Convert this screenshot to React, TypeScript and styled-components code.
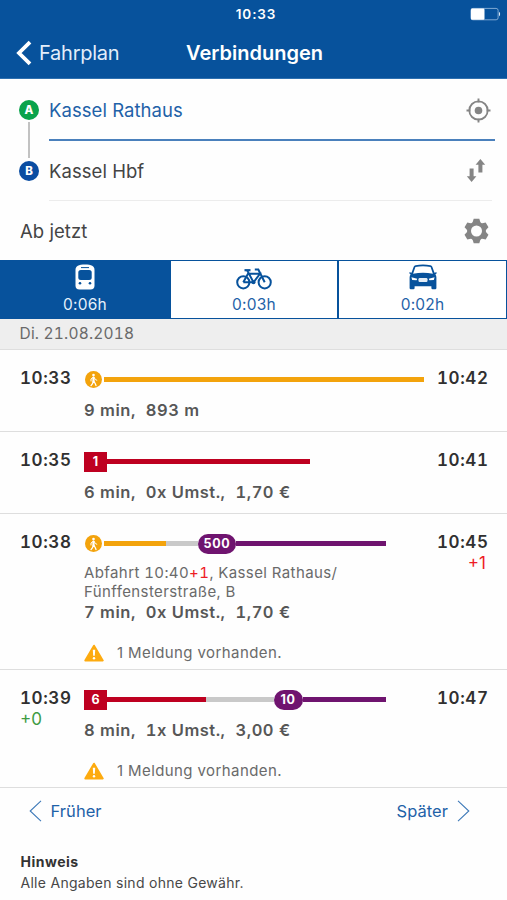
import React from "react";
import styled, { createGlobalStyle } from "styled-components";

const BLUE = "#07529c";
const LINK = "#1f62a8";
const RED = "#be0020";
const PURPLE = "#6f146f";
const AMBER = "#f3a30c";
const GREY = "#c9c9c9";

const GlobalStyle = createGlobalStyle`
  *, *::before, *::after { box-sizing: border-box; }
  body { margin: 0; background: #fff; font-family: Inter, "Liberation Sans", sans-serif; }
  svg { display: block; flex: none; }
`;

const Page = styled.div`
  width: 507px;
  height: 900px;
  overflow: hidden;
  background: #fefefe;
  display: flex;
  flex-direction: column;
  color: #3a3a3a;
`;

const Header = styled.header`
  height: 79px;
  flex: none;
  background: ${BLUE};
  color: #fff;
  border-bottom: 1px solid #2e70b0;
`;

const StatusBar = styled.div`
  height: 27px;
  display: grid;
  grid-template-columns: 1fr auto 1fr;
  align-items: center;
  padding: 1px 6px 0 11px;
`;

const Clock = styled.span`
  grid-column: 2;
  font-size: 13.5px;
  font-weight: 600;
  letter-spacing: 0.85px;
`;

const BatteryBox = styled.div`
  justify-self: end;
`;

const NavBar = styled.div`
  height: 51px;
  display: flex;
  align-items: center;
  padding-left: 16px;
`;

const BackLabel = styled.span`
  margin-left: 7px;
  width: 147px;
  font-size: 20px;
  letter-spacing: -0.25px;
  color: #e3eefa;
`;

const Title = styled.h1`
  margin: 0;
  font-size: 20px;
  font-weight: 600;
  letter-spacing: 0;
`;

const Form = styled.section`
  height: 181px;
  flex: none;
  display: grid;
  grid-template-columns: 49px 1fr;
`;

const Rail = styled.div`
  grid-row: 1 / span 2;
  display: flex;
  flex-direction: column;
  align-items: center;
  padding: 21px 0 0 9px;
`;

const StopBadge = styled.span<{ $color: string }>`
  width: 20px;
  height: 20px;
  flex: none;
  border-radius: 50%;
  background: ${(p) => p.$color};
  color: #fff;
  font-size: 11.5px;
  line-height: 20px;
  font-weight: 800;
  text-align: center;
`;

const RailLine = styled.span`
  width: 1.5px;
  height: 36px;
  margin: 2px 0 3px;
  background: #c2c2c2;
`;

const Field = styled.div<{ $active?: boolean }>`
  height: ${(p) => (p.$active ? 62 : 60)}px;
  margin-right: ${(p) => (p.$active ? 12 : 15)}px;
  padding-right: ${(p) => (p.$active ? 4 : 6)}px;
  padding-top: ${(p) => (p.$active ? 2 : 0)}px;
  border-bottom: ${(p) => (p.$active ? "2px solid #4a80bc" : "1px solid #ececec")};
  display: flex;
  align-items: center;
  justify-content: space-between;
  font-size: 18.5px;
  letter-spacing: 0.05px;
  color: ${(p) => (p.$active ? LINK : "#444")};
`;

const TimeField = styled.div`
  grid-column: 1 / -1;
  height: 59px;
  padding: 0 18px 0 20px;
  display: flex;
  align-items: center;
  justify-content: space-between;
  font-size: 18.5px;
  letter-spacing: 0.05px;
  color: #444;
`;

const Modes = styled.div`
  height: 59px;
  flex: none;
  display: grid;
  grid-template-columns: 170px 168px 169px;
  background: ${BLUE};
  padding: 1px 0;
`;

const Mode = styled.div<{ $active?: boolean }>`
  display: flex;
  flex-direction: column;
  align-items: center;
  justify-content: space-between;
  padding: 3px 0 3px;
  margin-right: ${(p) => (p.$active ? 0 : 1)}px;
  margin-left: ${(p) => (p.$active ? 0 : 1)}px;
  background: ${(p) => (p.$active ? BLUE : "#fff")};
  color: ${(p) => (p.$active ? "#e6f0fa" : LINK)};
  font-size: 15.5px;
  line-height: 20px;
  letter-spacing: 0.2px;
`;

const DateBar = styled.div`
  height: 31px;
  flex: none;
  padding-left: 19.5px;
  background: #eee;
  border-bottom: 1px solid #dedede;
  font-size: 15.5px;
  line-height: 30px;
  letter-spacing: 0.2px;
  font-variant-numeric: tabular-nums;
  color: #6a6a6a;
`;

const Trip = styled.article<{ $height: number }>`
  height: ${(p) => p.$height}px;
  flex: none;
  display: grid;
  grid-template-columns: 84px 1fr 70px;
  padding-top: 17px;
  border-bottom: 1px solid #dedede;
`;

const TimeCell = styled.div<{ $end?: boolean }>`
  display: flex;
  flex-direction: column;
  padding-left: ${(p) => (p.$end ? 0 : 20)}px;
`;

const Time = styled.time`
  font-size: 17px;
  line-height: 22px;
  font-weight: 600;
  letter-spacing: 0.6px;
  font-variant-numeric: tabular-nums;
  color: #303030;
`;

const Delay = styled.span<{ $late?: boolean }>`
  margin-right: ${(p) => (p.$late ? 21 : 0)}px;
  text-align: ${(p) => (p.$late ? "right" : "left")};
  font-size: 17px;
  line-height: 20px;
  color: ${(p) => (p.$late ? "#ee1c25" : "#3f9b43")};
`;

const Track = styled.div`
  height: 25px;
  display: flex;
  align-items: center;
`;

const Segment = styled.span<{ $w: number; $color: string }>`
  width: ${(p) => p.$w}px;
  height: 5px;
  flex: none;
  background: ${(p) => p.$color};
`;

const WalkBadge = styled.span`
  width: 17px;
  height: 17px;
  flex: none;
  margin: 0 2px 0 1px;
  border-radius: 50%;
  background: ${AMBER};
  display: flex;
  align-items: center;
  justify-content: center;
`;

const LineBadge = styled.span<{ $w: number; $pill?: boolean }>`
  width: ${(p) => p.$w}px;
  height: 20px;
  flex: none;
  border-radius: ${(p) => (p.$pill ? 10 : 0)}px;
  background: ${(p) => (p.$pill ? PURPLE : RED)};
  color: #fff;
  font-size: 12.5px;
  line-height: 20px;
  font-weight: 700;
  letter-spacing: ${(p) => (p.$pill ? 0.7 : 0)}px;
  text-align: center;
`;

const Departure = styled.p`
  margin: 7px 0 -7px;
  font-size: 15px;
  line-height: 19px;
  letter-spacing: 0.4px;
  font-variant-numeric: tabular-nums;
  color: #6a6a6a;
  white-space: nowrap;
`;

const DelayInline = styled.span`
  color: #ee1c25;
`;

const Summary = styled.div`
  margin-top: 8px;
  display: flex;
  gap: 10px;
  font-size: 16.5px;
  line-height: 20px;
  font-weight: 600;
  letter-spacing: 0.5px;
  font-variant-numeric: tabular-nums;
  color: #575757;
`;

const Notice = styled.div`
  margin-top: 21px;
  display: flex;
  align-items: center;
  gap: 13px;
  font-size: 15px;
  line-height: 20px;
  letter-spacing: 0.4px;
  color: #6a6a6a;
`;

const Pager = styled.nav`
  height: 47px;
  flex: none;
  display: flex;
  align-items: center;
  justify-content: space-between;
  padding: 0 37px 1px 28.5px;
`;

const PagerLink = styled.a`
  display: flex;
  align-items: center;
  gap: 9px;
  font-size: 16.5px;
  letter-spacing: 0.05px;
  color: ${LINK};
`;

const Footnote = styled.footer`
  padding: 17px 20px 0 20.5px;
  font-size: 14px;
  line-height: 20.5px;
  letter-spacing: 0.28px;
  color: #484848;
`;

const FootTitle = styled.div`
  font-weight: 700;
  letter-spacing: 0.5px;
  color: #333;
`;

const Battery = () => (
  <svg width="31" height="14" viewBox="0 0 31 14">
    <rect x="0.9" y="1.4" width="27.2" height="11.4" rx="2" fill="none" stroke="#7fa9d3" />
    <rect x="1" y="1.5" width="13.5" height="11.2" rx="1.2" fill="#fff" />
    <path d="M29 5v4.2c1.3-.3 1.6-3.8 0-4.2z" fill="#dce9f5" />
  </svg>
);

const BackIcon = () => (
  <svg width="16" height="26" viewBox="0 0 16 26">
    <path d="M14 2.2L3 13l11 10.8" fill="none" stroke="#fff" strokeWidth="3.8" />
  </svg>
);

const LocateIcon = () => (
  <svg width="25" height="25" viewBox="0 0 25 25" fill="none" stroke="#858585">
    <circle cx="12.5" cy="12.5" r="9.2" strokeWidth="1.8" />
    <path d="M12.5 .5v4M12.5 20.5v4M.5 12.5h4M20.5 12.5h4" strokeWidth="1.9" />
    <circle cx="12.5" cy="12.5" r="3.8" fill="#858585" stroke="none" />
  </svg>
);

const SwapIcon = () => (
  <svg width="20" height="25" viewBox="0 0 20 25" fill="#858585">
    <path d="M3.6 10.5h4v7.8h2.8L5.6 24 .8 18.3h2.8z" />
    <path d="M12.4 14.5h4V6.700h2.800L14.400 1 9.600 6.700h2.800z" />
  </svg>
);

const GearIcon = () => (
  <svg width="25" height="26" viewBox="-12.5 -13 25 26">
    <circle r="7.5" fill="none" stroke="#858585" strokeWidth="4" />
    <g fill="#858585">
      {[0, 60, 120, 180, 240, 300].map((a) => (
        <path key={a} d="M-4.1-8L-2.8-12.2h5.6L4.1-8z" transform={`rotate(${a})`} />
      ))}
    </g>
  </svg>
);

const TramIcon = () => (
  <svg width="20" height="26" viewBox="0 0 20 26">
    <path d="M.5 6C.5 2 3.5.5 10 .5S19.5 2 19.5 6v15.5a4 4 0 0 1-4 4h-11a4 4 0 0 1-4-4z" fill="#fff" />
    <path d="M6 3.6h8" stroke={BLUE} strokeWidth="1" />
    <rect x="3.3" y="6" width="13.4" height="10" rx="2.5" fill={BLUE} />
    <circle cx="5" cy="19.3" r="1.3" fill={BLUE} />
    <circle cx="15" cy="19.3" r="1.3" fill={BLUE} />
  </svg>
);

const BikeIcon = () => (
  <svg width="36" height="26" viewBox="0 0 36 26" fill="none" stroke={BLUE} strokeWidth="2">
    <circle cx="7.3" cy="18.3" r="6.1" />
    <circle cx="28.7" cy="18.3" r="6.1" />
    <path d="M7.3 18.3L12 9.8h12L17.5 18.3H7.3M11.3 6.6l6.2 11.7M28.7 18.3L22.3 5.6h-3.5" />
    <path d="M8.5 6.2h6" strokeWidth="2.2" />
    <circle cx="17.5" cy="18.3" r="2" fill={BLUE} stroke="none" />
  </svg>
);

const CarIcon = () => (
  <svg width="28" height="26" viewBox="0 0 28 26">
    <path
      fill={BLUE}
      fillRule="evenodd"
      d="M6.5 1.2Q14-.2 21.5 1.2q1.2.2 1.8 1.6l2.2 6 1.7-.5q.7.2.5 1l-1.3 1.3q1 1.2 1 3V24q0 1.2-1.2 1.2h-2.6q-1.2 0-1.2-1.2v-1.8H5.6V24q0 1.2-1.2 1.2H1.8Q.6 25.2.6 24V13.6q0-1.800 1-3L.3 9.300q-.2-.8.5-1l1.700.5 2.200-6Q5.300 1.400 6.500 1.200zM6.400 2.900L4.100 9.700q9.900-1.700 19.800 0L21.600 2.900Q14 1.700 6.400 2.900z"
    />
    <path d="M2.4 13.2l5.8 1.5-.6 1.5-4.4-.3zM25.6 13.2l-5.8 1.5.6 1.5 4.4-.3z" fill="#fff" />
    <rect x="9.5" y="14" width="9" height="4" rx="1.2" fill="#e4edf6" />
  </svg>
);

const WalkIcon = () => (
  <svg width="11" height="14" viewBox="0 0 11 14" fill="none" stroke="#fff" strokeLinecap="round" strokeLinejoin="round">
    <circle cx="5.5" cy="2" r="1.3" fill="#fff" stroke="none" />
    <path d="M5.5 4.5v4" strokeWidth="2.2" />
    <path d="M5.2 4.3L3 6v2M6 4.4L7.5 6.6l1.3.6" strokeWidth="1" />
    <path d="M5.2 8.5L4.5 10.6 3 12.6M6 8.5l1.2 2L8 12.6" strokeWidth="1.3" />
  </svg>
);

const WarnIcon = () => (
  <svg width="20" height="19" viewBox="0 0 20 19">
    <path d="M10 1.7L18.7 16.5H1.3z" fill="#fdab10" stroke="#fdab10" strokeWidth="2" strokeLinejoin="round" />
    <path d="M8.8 5.8h2.4l-.4 6H9.2z" fill="#fff" />
    <circle cx="10" cy="14.2" r="1.2" fill="#fff" />
  </svg>
);

const Chevron = ({ right }: { right?: boolean }) => (
  <svg width="13" height="22" viewBox="0 0 13 22">
    <path d={right ? "M1 .8L11.8 11 1 21.2" : "M12 .8L1.2 11 12 21.2"} fill="none" stroke="#3d79b8" strokeWidth="1.1" />
  </svg>
);

type Part =
  | { kind: "walk" }
  | { kind: "bar"; w: number; color: string }
  | { kind: "line"; w: number; label: string; pill?: boolean };

interface TripData {
  height: number;
  from: string;
  to: string;
  fromDelay?: string;
  toDelay?: string;
  parts: Part[];
  departure?: boolean;
  facts: string[];
  notice?: boolean;
}

const trips: TripData[] = [
  {
    height: 82, from: "10:33", to: "10:42",
    parts: [{ kind: "walk" }, { kind: "bar", w: 320, color: AMBER }],
    facts: ["9 min,", "893 m"],
  },
  {
    height: 82, from: "10:35", to: "10:41",
    parts: [{ kind: "line", w: 23, label: "1" }, { kind: "bar", w: 203, color: RED }],
    facts: ["6 min,", "0x Umst.,", "1,70 €"],
  },
  {
    height: 156, from: "10:38", to: "10:45", toDelay: "+1",
    parts: [
      { kind: "walk" },
      { kind: "bar", w: 62, color: AMBER },
      { kind: "bar", w: 32, color: GREY },
      { kind: "line", w: 38, label: "500", pill: true },
      { kind: "bar", w: 150, color: PURPLE },
    ],
    departure: true,
    facts: ["7 min,", "0x Umst.,", "1,70 €"],
    notice: true,
  },
  {
    height: 118, from: "10:39", to: "10:47", fromDelay: "+0",
    parts: [
      { kind: "line", w: 23, label: "6" },
      { kind: "bar", w: 98.5, color: RED },
      { kind: "bar", w: 68, color: GREY },
      { kind: "line", w: 29, label: "10", pill: true },
      { kind: "bar", w: 83.5, color: PURPLE },
    ],
    facts: ["8 min,", "1x Umst.,", "3,00 €"],
    notice: true,
  },
];

const TrackPart = ({ part }: { part: Part }) => {
  if (part.kind === "walk") return <WalkBadge><WalkIcon /></WalkBadge>;
  if (part.kind === "bar") return <Segment $w={part.w} $color={part.color} />;
  return <LineBadge $w={part.w} $pill={part.pill}>{part.label}</LineBadge>;
};

const TripRow = ({ trip }: { trip: TripData }) => (
  <Trip $height={trip.height}>
    <TimeCell>
      <Time>{trip.from}</Time>
      {trip.fromDelay && <Delay>{trip.fromDelay}</Delay>}
    </TimeCell>
    <div>
      <Track>{trip.parts.map((p, i) => <TrackPart key={i} part={p} />)}</Track>
      {trip.departure && (
        <Departure>
          Abfahrt 10:40<DelayInline>+1</DelayInline>, Kassel Rathaus/<br />Fünffensterstraße, B
        </Departure>
      )}
      <Summary>{trip.facts.map((f) => <span key={f}>{f}</span>)}</Summary>
      {trip.notice && <Notice><WarnIcon />1 Meldung vorhanden.</Notice>}
    </div>
    <TimeCell $end>
      <Time>{trip.to}</Time>
      {trip.toDelay && <Delay $late>{trip.toDelay}</Delay>}
    </TimeCell>
  </Trip>
);

export default function App() {
  return (
    <Page>
      <GlobalStyle />
      <Header>
        <StatusBar>
          <Clock>10:33</Clock>
          <BatteryBox><Battery /></BatteryBox>
        </StatusBar>
        <NavBar>
          <BackIcon />
          <BackLabel>Fahrplan</BackLabel>
          <Title>Verbindungen</Title>
        </NavBar>
      </Header>
      <Form>
        <Rail>
          <StopBadge $color="#0aa34b">A</StopBadge>
          <RailLine />
          <StopBadge $color="#0a4da2">B</StopBadge>
        </Rail>
        <Field $active>Kassel Rathaus<LocateIcon /></Field>
        <Field>Kassel Hbf<SwapIcon /></Field>
        <TimeField>Ab jetzt<GearIcon /></TimeField>
      </Form>
      <Modes>
        <Mode $active><TramIcon />0:06h</Mode>
        <Mode><BikeIcon />0:03h</Mode>
        <Mode><CarIcon />0:02h</Mode>
      </Modes>
      <DateBar>Di. 21.08.2018</DateBar>
      {trips.map((t) => <TripRow key={t.from} trip={t} />)}
      <Pager>
        <PagerLink><Chevron />Früher</PagerLink>
        <PagerLink>Später<Chevron right /></PagerLink>
      </Pager>
      <Footnote>
        <FootTitle>Hinweis</FootTitle>
        Alle Angaben sind ohne Gewähr.
      </Footnote>
    </Page>
  );
}
